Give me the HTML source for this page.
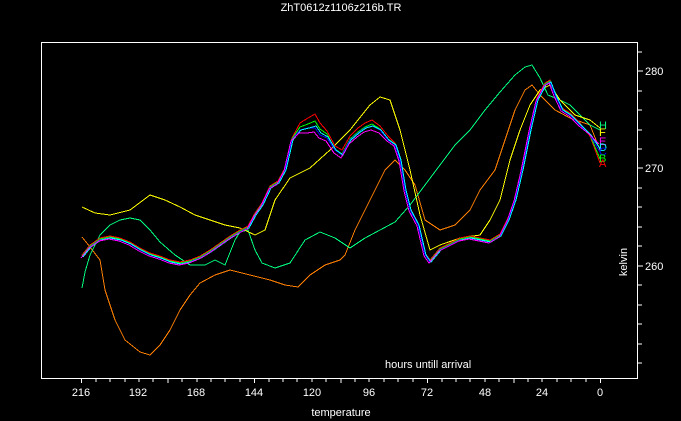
<!DOCTYPE html>
<html><head><style>
html,body{margin:0;padding:0;background:#000;}
svg{display:block}
text{font-family:"Liberation Sans",sans-serif;fill:#fff;font-size:11px}
</style></head><body>
<svg width="681" height="421" viewBox="0 0 681 421" xmlns="http://www.w3.org/2000/svg">
<rect width="681" height="421" fill="#000"/>
<text x="341" y="11" text-anchor="middle">ZhT0612z1106z216b.TR</text>
<rect x="41.5" y="42.5" width="596" height="336" fill="none" stroke="#fff" stroke-width="1"/>
<g stroke="#fff" stroke-width="1">
<path d="M81.5 378v5M96 378v4M110 378v4M125 378v4M139 378v4M153 378v4M168 378v5M182 378v4M197 378v4M211 378v4M225 378v4M240 378v4M254.5 378v5M269 378v4M283 378v4M297 378v4M312 378v4M326 378v4M341 378v5M355 378v4M369 378v4M384 378v4M398 378v4M413 378v4M427.5 378v5M442 378v4M456 378v4M470 378v4M485 378v4M499 378v4M514 378v5M528 378v4M542 378v4M557 378v4M571 378v4M586 378v4M600.5 378v5"/>
<path d="M637 52h5M637 71h6M637 91h5M637 110h5M637 130h5M637 149h5M637 168h6M637 188h5M637 207h5M637 227h5M637 246h5M637 266h6M637 285h5M637 305h5M637 324h5M637 344h5M637 363h5"/>
</g>
<g text-anchor="middle">
<text x="81" y="396">216</text><text x="138" y="396">192</text><text x="196" y="396">168</text><text x="254" y="396">144</text><text x="312" y="396">120</text><text x="369" y="396">96</text><text x="427" y="396">72</text><text x="485" y="396">48</text><text x="542" y="396">24</text><text x="600" y="396">0</text>
<text x="341" y="416">temperature</text>
</g>
<text x="645" y="75">280</text><text x="645" y="172">270</text><text x="645" y="270">260</text>
<text x="385" y="368">hours untill arrival</text>
<text transform="translate(627,262) rotate(-90)" text-anchor="middle">kelvin</text>
<g fill="none" stroke-width="1" shape-rendering="crispEdges">
<polyline stroke="#ff8000" points="82,237 90,247 100,260 105,290 115,320 125,340 140,352 150,355 160,345 170,330 180,310 190,295 200,283 215,275 230,270 250,275 270,280 285,285 298,287 310,275 325,265 340,260 345,255 355,230 365,210 375,190 385,170 395,160 405,170 415,185 425,220 440,230 455,225 470,210 480,190 495,170 505,140 515,110 525,90 532,85 540,95 555,110 570,118 590,125 600,150"/>
<polyline stroke="#00ff80" points="82,288 85,272 90,255 100,235 110,225 120,220 130,218 140,220 150,230 160,242 175,255 190,265 205,265 215,260 225,265 235,240 240,232 248,230 255,250 262,263 275,268 290,263 305,240 320,232 335,238 350,248 365,238 380,230 395,222 410,205 425,185 440,165 455,145 470,130 485,110 500,92 515,75 525,67 532,65 540,78 548,95 560,100 570,105 580,115 590,125 600,130"/>
<polyline stroke="#ffff00" points="82,207 95,213 110,215 130,210 150,195 165,200 180,207 195,215 210,220 225,225 240,228 255,235 265,230 275,200 290,178 310,168 330,150 350,130 370,105 380,97 390,100 400,130 410,170 420,215 430,250 440,245 460,238 480,235 490,220 500,200 510,160 520,130 530,105 540,90 550,85 560,100 575,115 590,120 600,128"/>
<polyline stroke="#ff0000" transform="translate(0,-2)" points="82,257 90,247 100,240 110,238 120,240 130,244 140,250 150,255 160,258 170,262 180,264 190,262 200,258 210,252 220,245 230,238 240,232 248,228 255,215 262,205 270,188 278,183 285,170 292,140 300,125 308,120 315,116 320,125 327,133 335,148 342,152 350,138 358,130 365,125 372,122 380,128 388,138 395,145 400,160 405,190 410,210 418,225 425,255 430,262 440,250 450,245 460,240 470,238 480,240 490,242 500,236 508,220 515,200 522,170 530,130 537,100 545,85 550,82 555,95 562,110 570,115 580,125 590,138 600,165"/>
<polyline stroke="#00ff00" transform="translate(0,-1)" points="82,257 90,247 100,240 110,238 120,240 130,244 140,250 150,255 160,258 170,262 180,264 190,262 200,258 210,252 220,245 230,238 240,232 248,228 255,215 262,205 270,188 278,183 285,170 292,140 300,128 308,125 315,122 320,130 327,135 335,150 342,155 350,140 358,133 365,128 372,125 380,130 388,140 395,145 400,160 405,190 410,210 418,225 425,255 430,262 440,250 450,245 460,240 470,238 480,240 490,242 500,236 508,220 515,200 522,170 530,130 537,100 545,85 550,82 555,95 562,110 570,115 580,125 590,136 600,160"/>
<polyline stroke="#0000ff" points="82,257 90,247 100,240 110,238 120,240 130,244 140,250 150,255 160,258 170,262 180,264 190,262 200,258 210,252 220,245 230,238 240,232 248,228 255,215 262,205 270,188 278,183 285,170 292,140 300,130 308,128 315,128 320,135 327,138 335,150 342,155 350,140 358,133 365,128 372,126 380,130 388,140 395,145 400,160 405,190 410,210 418,225 425,255 430,262 440,250 450,245 460,240 470,238 480,240 490,242 500,236 508,220 515,200 522,170 530,130 537,100 545,85 550,82 555,95 562,110 570,115 580,125 590,135 600,152"/>
<polyline stroke="#00ffff" transform="translate(1,0)" points="82,257 90,247 100,240 110,238 120,240 130,244 140,250 150,255 160,258 170,262 180,264 190,262 200,258 210,252 220,245 230,238 240,232 248,228 255,215 262,205 270,188 278,183 285,170 292,140 300,130 308,128 315,126 320,133 327,137 335,150 342,155 350,140 358,133 365,128 372,126 380,130 388,140 395,145 400,160 405,190 410,210 418,225 425,255 430,262 440,250 450,245 460,240 470,238 480,240 490,242 500,236 508,220 515,200 522,170 530,130 537,100 545,85 550,82 555,95 562,110 570,115 580,125 590,135 600,150"/>
<polyline stroke="#ff00ff" transform="translate(-1,1)" points="82,257 90,247 100,240 110,238 120,240 130,244 140,250 150,255 160,258 170,262 180,264 190,262 200,258 210,252 220,245 230,238 240,232 248,228 255,215 262,205 270,188 278,183 285,170 292,140 300,132 308,132 315,131 320,137 327,140 335,152 342,157 350,143 358,136 365,131 372,129 380,132 388,140 395,145 400,160 405,190 410,210 418,225 425,255 430,262 440,250 450,245 460,240 470,238 480,240 490,242 500,236 508,220 515,200 522,170 530,130 537,100 545,85 550,82 555,95 562,110 570,115 580,125 590,133 600,143"/>
</g>
<g font-size="10">
<text x="599" y="129" style="fill:#00ff80">H</text>
<text x="599" y="136" style="fill:#ffff00">F</text>
<text x="599" y="145" style="fill:#ff00ff">E</text>
<text x="599" y="151" style="fill:#00ffff">D</text>
<text x="599" y="155" style="fill:#0000ff">C</text>
<text x="599" y="162" style="fill:#00ff00">B</text>
<text x="599" y="167" style="fill:#ff0000">A</text>
</g>
</svg>
</body></html>
